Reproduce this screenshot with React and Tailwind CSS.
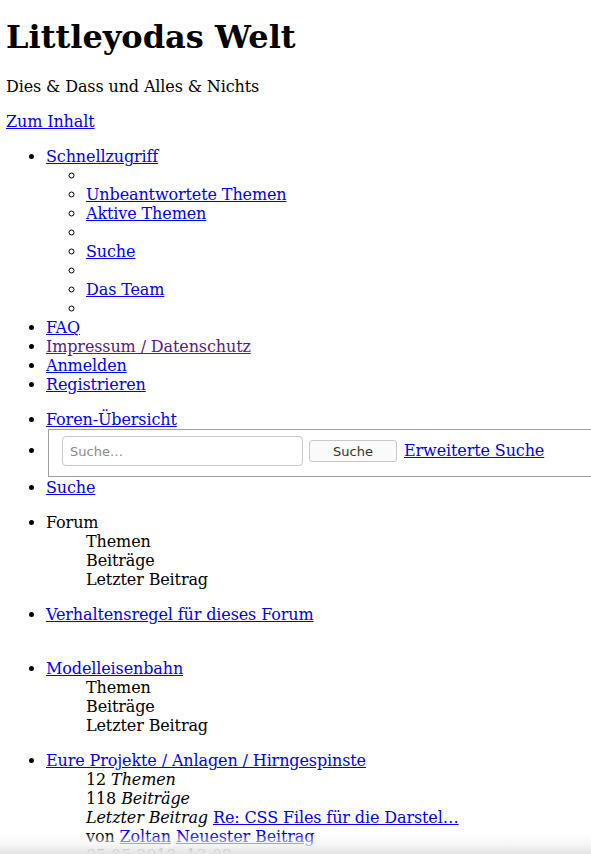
const NAV_QUICK = [
  '',
  'Unbeantwortete Themen',
  'Aktive Themen',
  '',
  'Suche',
  '',
  'Das Team',
  ''
];

function A({ children, visited = false }) {
  return (
    <a
      href="#"
      className={`underline ${visited ? 'text-[#551a8b]' : 'text-[#0000ee]'}`}
    >
      {children}
    </a>
  );
}

function Stats({ children }) {
  return <div className="ml-10">{children}</div>;
}

export default function App() {
  return (
    <div className="min-h-screen overflow-x-hidden bg-white pr-2 pl-[6px] pb-8 font-['DejaVu_Serif','Liberation_Serif',serif] text-base leading-[normal] tracking-[-0.12px] text-black">
      <h1 className="mt-[18px] mb-[21.44px] text-[32px] font-bold tracking-normal">Littleyodas Welt</h1>
      <p className="my-4">Dies &amp; Dass und Alles &amp; Nichts</p>
      <p className="my-4">
        <A>Zum Inhalt</A>
      </p>

      <ul className="my-4 list-disc pl-10">
        <li>
          <A>Schnellzugriff</A>
          <ul className="list-[circle] pl-10">
            {NAV_QUICK.map((item, i) => (
              <li key={i}>{item ? <A>{item}</A> : '\u00a0'}</li>
            ))}
          </ul>
        </li>
        <li>
          <A>FAQ</A>
        </li>
        <li>
          <A visited>Impressum / Datenschutz</A>
        </li>
        <li>
          <A>Anmelden</A>
        </li>
        <li>
          <A>Registrieren</A>
        </li>
      </ul>

      <ul className="my-4 list-disc pl-10">
        <li>
          <A>Foren-Übersicht</A>
        </li>
        <li className="mb-px">
          <div className="ml-[2px] -mr-2 inline-flex h-[48px] w-[calc(100%+6px)] items-start border border-r-0 border-[#a0a0a0] pt-[6px] pl-[13px]">
            <input
              type="text"
              placeholder="Suche…"
              className="h-[30px] w-[241px] rounded-[4px] border border-[#c8c8c8] bg-white px-[7px] font-['DejaVu_Sans',sans-serif] text-[13px] tracking-normal text-[#333] placeholder:text-[#8a8a8a] outline-none"
            />
            <button className="mt-[4px] ml-[6px] h-[22px] w-[88px] rounded-[3px] border border-[#c8c8c8] bg-[#fafafa] font-['DejaVu_Sans',sans-serif] text-[13px] tracking-normal text-[#333]">
              Suche
            </button>
            <span className="mt-[5px] ml-[7px]">
              <A>Erweiterte Suche</A>
            </span>
          </div>
        </li>
        <li>
          <A>Suche</A>
        </li>
      </ul>

      <ul className="my-4 list-disc pl-10">
        <li>
          Forum
          <Stats>Themen</Stats>
          <Stats>Beiträge</Stats>
          <Stats>Letzter Beitrag</Stats>
        </li>
      </ul>

      <ul className="mt-4 mb-[35px] list-disc pl-10">
        <li>
          <A>Verhaltensregel für dieses Forum</A>
        </li>
      </ul>

      <ul className="my-4 list-disc pl-10">
        <li>
          <A>Modelleisenbahn</A>
          <Stats>Themen</Stats>
          <Stats>Beiträge</Stats>
          <Stats>Letzter Beitrag</Stats>
        </li>
      </ul>

      <ul className="my-4 list-disc pl-10">
        <li>
          <A>Eure Projekte / Anlagen / Hirngespinste</A>
          <Stats>
            12 <em>Themen</em>
          </Stats>
          <Stats>
            118 <em>Beiträge</em>
          </Stats>
          <Stats>
            <em>Letzter Beitrag</em> <A>Re: CSS Files für die Darstel…</A>
          </Stats>
          <Stats>
            von <A>Zoltan</A> <A>Neuester Beitrag</A>
          </Stats>
          <Stats>05.05.2019, 13:09</Stats>
        </li>
      </ul>

      <div className="pointer-events-none fixed inset-x-0 bottom-0 h-[20px] bg-gradient-to-b from-white/0 via-[#f3f3f3]/70 to-[#e4e4e4]" />
    </div>
  );
}
